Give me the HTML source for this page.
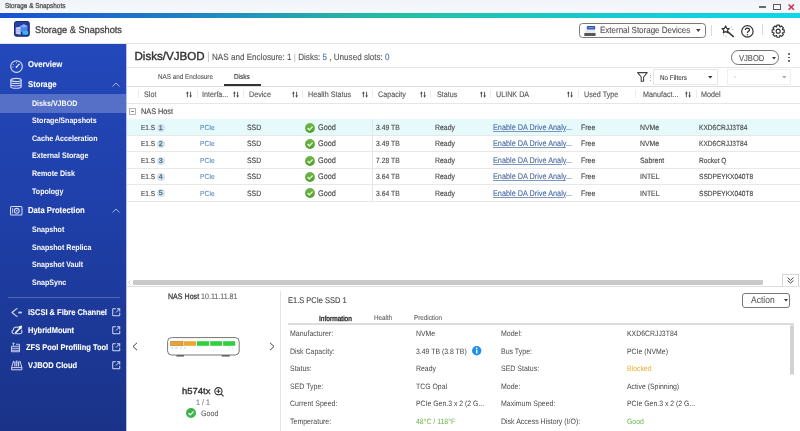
<!DOCTYPE html><html><head><meta charset="utf-8"><style>
*{margin:0;padding:0;box-sizing:border-box}
html,body{width:800px;height:431px;overflow:hidden;background:#fff;font-family:"Liberation Sans",sans-serif;text-rendering:geometricPrecision}
.t{position:absolute;white-space:nowrap;transform-origin:0 50%;-webkit-text-stroke-width:0.12px}
.a{position:absolute}
svg{position:absolute;overflow:visible}
</style></head><body><div id="root" style="position:absolute;left:0;top:0;width:800px;height:431px;will-change:transform;background:#fff;filter:blur(0.3px)">
<div class="a" style="left:0;top:0;width:800px;height:13px;background:linear-gradient(#f0f3f8,#f7f9fc)"></div><div class="t" style="left:5px;top:1.40px;font-size:7.17px;line-height:10px;color:#505050;font-weight:400;transform:scaleX(0.8929);-webkit-text-stroke-width:0.3px">Storage &amp; Snapshots</div>
<div class="a" style="left:758.8px;top:5.7px;width:7.1px;height:2px;background:#6a6a6a"></div><div class="a" style="left:772.8px;top:3.8px;width:8.2px;height:6.3px;border:1.8px solid #5a5a5a"></div><svg style="left:787.8px;top:3.8px" width="6.5" height="6.3" viewBox="0 0 6.5 6.3"><path d="M0.6 0.5L5.9 5.8M5.9 0.5L0.6 5.8" stroke="#cc3344" stroke-width="1.6"/></svg><div class="a" style="left:0;top:13px;width:800px;height:4.5px;background:linear-gradient(90deg,#1652d6 0%,#1e70c8 15%,#2090c0 29%,#26b0aa 42%,#20c0a2 50%,#20c4b0 57%,#18c8c8 71%,#12d0dc 85%,#10d6e8 100%)"></div><div class="a" style="left:0;top:43px;width:800px;height:1px;background:#e2e2e2"></div><svg style="left:14px;top:21.3px" width="15.8" height="15.8" viewBox="0 0 16 16">
<defs><linearGradient id="ag" x1="0" y1="0" x2="1" y2="1"><stop offset="0" stop-color="#2a48b0"/><stop offset="1" stop-color="#1a2a80"/></linearGradient></defs>
<rect x="0" y="0" width="16" height="16" rx="3" fill="#17206a"/>
<rect x="0.8" y="0.8" width="14.4" height="14.4" rx="2.4" fill="url(#ag)"/>
<path d="M6.5 5 L10 3.2 L13.8 5 L13.8 10.5 L10 12.5 L6.5 10.5Z" fill="#4a86ea"/>
<path d="M6.5 5 L10 6.8 L13.8 5 L10 3.2Z" fill="#7fb0f8"/>
<path d="M1.8 6.5 L6.8 5.5 L6.8 14 L1.8 13Z" fill="#c4d0f6"/>
<path d="M1.8 9 L6.8 8.6 M1.8 11 L6.8 10.8" stroke="#7890d8" stroke-width="0.6"/>
<rect x="8.6" y="10.2" width="5.8" height="3.8" rx="1" fill="#3ab4f2"/>
</svg><div class="t" style="left:35px;top:24.60px;font-size:9.66px;line-height:12px;color:#444;font-weight:400;transform:scaleX(0.9524);-webkit-text-stroke:0.3px #444">Storage &amp; Snapshots</div>
<div class="a" style="left:579px;top:23.3px;width:126.5px;height:14.6px;border:1px solid #7a7a7a;border-radius:3.5px"></div><svg style="left:584px;top:25.5px" width="12" height="10" viewBox="0 0 12 10">
<rect x="1.2" y="3" width="9.8" height="4" fill="#e4ecf6"/>
<rect x="2.8" y="0" width="8.4" height="3.6" rx="1.1" fill="#2d52b0"/>
<rect x="4.2" y="1.3" width="5.6" height="0.9" fill="#8fb2f2"/>
<rect x="0.3" y="7" width="11.3" height="2.9" rx="0.3" fill="#585858"/>
</svg><div class="t" style="left:600px;top:24.80px;font-size:8.96px;line-height:10px;color:#555;font-weight:400;transform:scaleX(0.8929);">External Storage Devices</div>
<svg style="left:696px;top:29.2px" width="5" height="3.5" viewBox="0 0 5 3.5"><path d="M0 0H4.6L2.3 3Z" fill="#444"/></svg><div class="a" style="left:711px;top:24.5px;width:1px;height:11px;background:#dadada"></div><div class="a" style="left:762px;top:24.3px;width:1px;height:11px;background:#dadada"></div><svg style="left:720px;top:24px" width="16" height="14" viewBox="0 0 16 14">
<path d="M5.6 2 L6.7 4.3 L9.2 4.6 L7.4 6.3 L7.9 8.8 L5.6 7.6 L3.3 8.8 L3.8 6.3 L2 4.6 L4.5 4.3Z" fill="none" stroke="#333" stroke-width="1.2" stroke-linejoin="round"/>
<path d="M7.6 7.6 L13.4 12.6" stroke="#333" stroke-width="1.4" stroke-linecap="round"/>
<circle cx="11.2" cy="3" r="0.55" fill="#888"/><circle cx="12.8" cy="5.5" r="0.55" fill="#888"/><circle cx="3.5" cy="11" r="0.55" fill="#888"/><circle cx="6" cy="12" r="0.55" fill="#888"/>
</svg><svg style="left:740.5px;top:24.6px" width="13" height="13" viewBox="0 0 13 13">
<circle cx="6.4" cy="6.4" r="5.7" fill="none" stroke="#333" stroke-width="1.2"/>
<path d="M4.4 5 C4.4 2.6 8.5 2.6 8.5 4.9 C8.5 6.4 6.4 6.3 6.4 8" fill="none" stroke="#333" stroke-width="1.3"/>
<circle cx="6.4" cy="9.7" r="0.8" fill="#333"/>
</svg><svg style="left:770.8px;top:23.8px" width="14.4" height="14.4" viewBox="0 0 24 24">
<path d="M9.32 4.89 L9.75 1.95 L14.25 1.95 L14.68 4.89 L15.14 5.08 L17.52 3.30 L20.70 6.48 L18.92 8.86 L19.11 9.32 L22.05 9.75 L22.05 14.25 L19.11 14.68 L18.92 15.14 L20.70 17.52 L17.52 20.70 L15.14 18.92 L14.68 19.11 L14.25 22.05 L9.75 22.05 L9.32 19.11 L8.86 18.92 L6.48 20.70 L3.30 17.52 L5.08 15.14 L4.89 14.68 L1.95 14.25 L1.95 9.75 L4.89 9.32 L5.08 8.86 L3.30 6.48 L6.48 3.30 L8.86 5.08Z" fill="none" stroke="#333" stroke-width="1.9" stroke-linejoin="round"/>
<circle cx="12" cy="12" r="3.4" fill="none" stroke="#333" stroke-width="1.8"/>
</svg><div class="a" style="left:0;top:44px;width:126px;height:387px;background:linear-gradient(#2348ba,#1f3fa8 45%,#1a3388)"></div><div class="a" style="left:0;top:94px;width:126px;height:18.5px;background:#5570c6"></div><div class="t" style="left:28px;top:59.20px;font-size:8.62px;line-height:10px;color:#ffffff;font-weight:700;transform:scaleX(0.8929);-webkit-text-stroke-width:0.1px">Overview</div>
<div class="t" style="left:28px;top:79.00px;font-size:8.62px;line-height:10px;color:#ffffff;font-weight:700;transform:scaleX(0.8929);-webkit-text-stroke-width:0.1px">Storage</div>
<div class="t" style="left:28px;top:205.30px;font-size:8.62px;line-height:10px;color:#ffffff;font-weight:700;transform:scaleX(0.8929);-webkit-text-stroke-width:0.1px">Data Protection</div>
<div class="t" style="left:31.7px;top:98.60px;font-size:7.95px;line-height:10px;color:#ffffff;font-weight:700;transform:scaleX(0.8929);-webkit-text-stroke-width:0">Disks/VJBOD</div>
<div class="t" style="left:31.7px;top:116.20px;font-size:7.95px;line-height:10px;color:#ffffff;font-weight:700;transform:scaleX(0.8929);-webkit-text-stroke-width:0">Storage/Snapshots</div>
<div class="t" style="left:31.7px;top:133.80px;font-size:7.95px;line-height:10px;color:#ffffff;font-weight:700;transform:scaleX(0.8929);-webkit-text-stroke-width:0">Cache Acceleration</div>
<div class="t" style="left:31.7px;top:151.40px;font-size:7.95px;line-height:10px;color:#ffffff;font-weight:700;transform:scaleX(0.8929);-webkit-text-stroke-width:0">External Storage</div>
<div class="t" style="left:31.7px;top:168.90px;font-size:7.95px;line-height:10px;color:#ffffff;font-weight:700;transform:scaleX(0.8929);-webkit-text-stroke-width:0">Remote Disk</div>
<div class="t" style="left:31.7px;top:186.50px;font-size:7.95px;line-height:10px;color:#ffffff;font-weight:700;transform:scaleX(0.8929);-webkit-text-stroke-width:0">Topology</div>
<div class="t" style="left:31.7px;top:225.10px;font-size:7.95px;line-height:10px;color:#ffffff;font-weight:700;transform:scaleX(0.8929);-webkit-text-stroke-width:0">Snapshot</div>
<div class="t" style="left:31.7px;top:242.80px;font-size:7.95px;line-height:10px;color:#ffffff;font-weight:700;transform:scaleX(0.8929);-webkit-text-stroke-width:0">Snapshot Replica</div>
<div class="t" style="left:31.7px;top:260.40px;font-size:7.95px;line-height:10px;color:#ffffff;font-weight:700;transform:scaleX(0.8929);-webkit-text-stroke-width:0">Snapshot Vault</div>
<div class="t" style="left:31.7px;top:278.00px;font-size:7.95px;line-height:10px;color:#ffffff;font-weight:700;transform:scaleX(0.8929);-webkit-text-stroke-width:0">SnapSync</div>
<svg style="left:112px;top:81.5px" width="8" height="5" viewBox="0 0 8 5"><path d="M0.5 4.5 L4 1 L7.5 4.5" fill="none" stroke="#b4c2ec" stroke-width="0.9"/></svg><svg style="left:112px;top:207.8px" width="8" height="5" viewBox="0 0 8 5"><path d="M0.5 4.5 L4 1 L7.5 4.5" fill="none" stroke="#b4c2ec" stroke-width="0.9"/></svg><div class="a" style="left:8px;top:297px;width:112px;height:1px;background:rgba(255,255,255,0.22)"></div><div class="t" style="left:28.2px;top:307.40px;font-size:8.40px;line-height:10px;color:#ffffff;font-weight:700;transform:scaleX(0.8929);-webkit-text-stroke-width:0.1px">iSCSI &amp; Fibre Channel</div>
<svg style="left:112px;top:308.4px" width="8.5" height="8.5" viewBox="0 0 9 9"><path d="M4 0.8 H0.8 V8.2 H8.2 V5" fill="none" stroke="#dfe6fa" stroke-width="1"/><path d="M4.2 4.8 L8.2 0.8 M5.2 0.8 H8.2 V3.8" fill="none" stroke="#dfe6fa" stroke-width="1"/></svg><div class="t" style="left:28.2px;top:324.70px;font-size:8.40px;line-height:10px;color:#ffffff;font-weight:700;transform:scaleX(0.8929);-webkit-text-stroke-width:0.1px">HybridMount</div>
<svg style="left:112px;top:325.7px" width="8.5" height="8.5" viewBox="0 0 9 9"><path d="M4 0.8 H0.8 V8.2 H8.2 V5" fill="none" stroke="#dfe6fa" stroke-width="1"/><path d="M4.2 4.8 L8.2 0.8 M5.2 0.8 H8.2 V3.8" fill="none" stroke="#dfe6fa" stroke-width="1"/></svg><div class="t" style="left:25.6px;top:342.20px;font-size:8.40px;line-height:10px;color:#ffffff;font-weight:700;transform:scaleX(0.8929);-webkit-text-stroke-width:0.1px">ZFS Pool Profiling Tool</div>
<svg style="left:112px;top:343.2px" width="8.5" height="8.5" viewBox="0 0 9 9"><path d="M4 0.8 H0.8 V8.2 H8.2 V5" fill="none" stroke="#dfe6fa" stroke-width="1"/><path d="M4.2 4.8 L8.2 0.8 M5.2 0.8 H8.2 V3.8" fill="none" stroke="#dfe6fa" stroke-width="1"/></svg><div class="t" style="left:28.2px;top:359.50px;font-size:8.40px;line-height:10px;color:#ffffff;font-weight:700;transform:scaleX(0.8929);-webkit-text-stroke-width:0.1px">VJBOD Cloud</div>
<svg style="left:112px;top:360.5px" width="8.5" height="8.5" viewBox="0 0 9 9"><path d="M4 0.8 H0.8 V8.2 H8.2 V5" fill="none" stroke="#dfe6fa" stroke-width="1"/><path d="M4.2 4.8 L8.2 0.8 M5.2 0.8 H8.2 V3.8" fill="none" stroke="#dfe6fa" stroke-width="1"/></svg><svg style="left:9.8px;top:60.2px" width="13" height="13" viewBox="0 0 13 13">
<circle cx="6.5" cy="6.5" r="5.8" fill="none" stroke="#d5ddf5" stroke-width="1.15"/>
<path d="M6.5 7 L9 4.2" stroke="#d5ddf5" stroke-width="1.2" stroke-linecap="round"/><circle cx="6.5" cy="7" r="0.9" fill="#d5ddf5"/>
<path d="M3.2 4.4 L4 5 M6.5 2.2 V3.2 M9.9 4.3 L9.1 4.9 M2.4 7 H3.3" stroke="#d5ddf5" stroke-width="0.9"/>
</svg><svg style="left:10.3px;top:78.2px" width="12" height="11" viewBox="0 0 12 11">
<ellipse cx="6" cy="2" rx="5.2" ry="1.6" fill="none" stroke="#d5ddf5" stroke-width="1.1"/>
<path d="M0.8 2 V8.8 C0.8 10.8 11.2 10.8 11.2 8.8 V2 M0.8 4.3 C0.8 6 11.2 6 11.2 4.3 M0.8 6.6 C0.8 8.4 11.2 8.4 11.2 6.6" fill="none" stroke="#d5ddf5" stroke-width="1.05"/>
</svg><svg style="left:10px;top:205.5px" width="12.5" height="9.5" viewBox="0 0 12 9">
<rect x="0.5" y="0.5" width="11" height="8" rx="1" fill="none" stroke="#d5ddf5" stroke-width="1"/>
<circle cx="6.5" cy="4.5" r="2.3" fill="none" stroke="#d5ddf5" stroke-width="1"/><circle cx="6.5" cy="4.5" r="0.8" fill="#d5ddf5"/>
<path d="M2.5 2 V7" stroke="#d5ddf5" stroke-width="0.8"/>
</svg><svg style="left:11px;top:307.5px" width="12" height="9" viewBox="0 0 12 9">
<path d="M6.6 0.8 H5.4 L1 4.5 L5.4 8.2 H6.6" fill="none" stroke="#d5ddf5" stroke-width="1.1" stroke-linejoin="round"/><path d="M7.4 4.5 H10.8" stroke="#d5ddf5" stroke-width="1.7"/>
</svg><svg style="left:11px;top:325px" width="12" height="9.5" viewBox="0 0 12 9.5">
<path d="M3.2 8.8 C0.6 8.8 0.2 5.6 2.3 5 C2.2 2.2 5.6 1.2 7.3 2.8" fill="none" stroke="#d5ddf5" stroke-width="1.1"/>
<path d="M3.4 8.8 H9 C11 8.8 11.6 6.4 10.4 5.2" fill="none" stroke="#d5ddf5" stroke-width="1.1"/>
<path d="M4.2 8 L9.2 3" stroke="#fff" stroke-width="1.6"/><path d="M7 1.6 L11.2 0.6 L10.3 4.8Z" fill="#fff"/>
</svg><svg style="left:11px;top:342px" width="9" height="10.5" viewBox="0 0 9 10">
<path d="M2.5 3.5 V0.5 M1.3 1.7 L2.5 0.5 L3.7 1.7" fill="none" stroke="#d5ddf5" stroke-width="0.8"/>
<path d="M0.5 4 H8.5 M0.5 6 H8.5 M0.5 8 H8.5 M0.5 4 V9.5 H8.5 V4 M5 2 H8.5 V4" fill="none" stroke="#d5ddf5" stroke-width="0.9"/>
</svg><svg style="left:10.8px;top:359.5px" width="11.5" height="10.5" viewBox="0 0 11.5 10.5">
<path d="M2.6 0.8 L0.6 7.6 V9.8 H10.9 V7.6 L8.9 0.8 M0.6 7.6 H10.9" fill="none" stroke="#d5ddf5" stroke-width="0.95"/>
<path d="M3.9 2 V6.4 M5.75 0.6 V6.4 M7.6 2 V6.4" stroke="#d5ddf5" stroke-width="1.1"/>
<path d="M3 2.6 L3.9 1.4 L4.8 2.6 M6.7 2.6 L7.6 1.4 L8.5 2.6" fill="none" stroke="#d5ddf5" stroke-width="0.7"/>
</svg><div class="a" style="left:126px;top:44px;width:1px;height:387px;background:#b8c2ea"></div><div class="t" style="left:134.5px;top:50.00px;font-size:11.60px;line-height:14px;color:#333;font-weight:400;-webkit-text-stroke-width:0.4px">Disks/VJBOD</div>
<div class="a" style="left:207.5px;top:52px;width:1px;height:10px;background:#c8c8c8"></div><div class="t" style="left:212px;top:51.80px;font-size:9.07px;line-height:10px;color:#555;font-weight:400;transform:scaleX(0.8929);">NAS and Enclosure: 1 <span style="color:#bbb">|</span> Disks: <span style="color:#4a72a8">5</span> , Unused slots: <span style="color:#4a72a8">0</span></div>
<div class="a" style="left:731px;top:50.2px;width:47.5px;height:14.6px;border:1px solid #707070;border-radius:7.3px"></div><div class="t" style="left:739px;top:52.60px;font-size:8.51px;line-height:10px;color:#555;font-weight:400;transform:scaleX(0.8929);">VJBOD</div>
<svg style="left:771.5px;top:56.5px" width="4" height="3" viewBox="0 0 4 3"><path d="M0 0H4L2 2.5Z" fill="#333"/></svg><div class="a" style="left:788.4px;top:53.2px;width:1.8px;height:1.8px;background:#4a4a4a;border-radius:50%"></div><div class="a" style="left:788.4px;top:56.5px;width:1.8px;height:1.8px;background:#4a4a4a;border-radius:50%"></div><div class="a" style="left:788.4px;top:59.8px;width:1.8px;height:1.8px;background:#4a4a4a;border-radius:50%"></div><div class="a" style="left:127px;top:67px;width:673px;height:1px;background:#e6e6e6"></div><div class="t" style="left:157.5px;top:74.00px;font-size:7.06px;line-height:8px;color:#555;font-weight:400;transform:scaleX(0.8929);">NAS and Enclosure</div>
<div class="t" style="left:233.75px;top:72.90px;font-size:7.17px;line-height:8px;color:#333;font-weight:400;transform:scaleX(0.8929);">Disks</div>
<div class="a" style="left:223.75px;top:84px;width:37px;height:2px;background:#333"></div><div class="a" style="left:127px;top:85.5px;width:673px;height:1px;background:#dcdcdc"></div><svg style="left:636.8px;top:72px" width="11" height="10" viewBox="0 0 11 10"><path d="M0.6 0.6 H10.2 L6.6 5 V9.2 H4.2 V5Z" fill="none" stroke="#444" stroke-width="1.1" stroke-linejoin="round"/></svg><div class="a" style="left:650px;top:74.5px;width:1px;height:1px;background:#aaa"></div><div class="a" style="left:650px;top:77px;width:1px;height:1px;background:#aaa"></div><div class="a" style="left:650px;top:79.5px;width:1px;height:1px;background:#aaa"></div><div class="a" style="left:653.2px;top:69.2px;width:65px;height:15.6px;border:1px solid #e6e6e6"></div><div class="t" style="left:660px;top:74.50px;font-size:7.06px;line-height:8px;color:#444;font-weight:400;transform:scaleX(0.8929);">No Filters</div>
<svg style="left:708px;top:76px" width="4.5" height="3" viewBox="0 0 4.5 3"><path d="M0 0H4.5L2.25 2.6Z" fill="#333"/></svg><div class="a" style="left:727px;top:69.2px;width:64px;height:15.6px;border:1px solid #efefef"></div><div class="t" style="left:733.5px;top:74.00px;font-size:7.06px;line-height:8px;color:#ccc;font-weight:400;transform:scaleX(0.8929);">-</div>
<svg style="left:781.5px;top:76px" width="4.5" height="3" viewBox="0 0 4.5 3"><path d="M0 0H4.5L2.25 2.6Z" fill="#aaa"/></svg><div class="a" style="left:137.95px;top:90px;width:1px;height:8px;background:#ececec"></div><div class="t" style="left:143.75px;top:89.80px;font-size:8.06px;line-height:10px;color:#555;font-weight:400;transform:scaleX(0.8929);">Slot</div>
<svg style="left:185.75px;top:91.3px" width="6" height="7" viewBox="0 0 6 7"><path d="M1.4 6.2 V1.8 M4.6 0.8 V5.2" stroke="#444" stroke-width="0.9"/><path d="M0.1 2.4 L1.4 0.3 L2.7 2.4Z M3.3 4.6 L4.6 6.8 L5.9 4.6Z" fill="#444"/></svg><div class="a" style="left:196.7px;top:90px;width:1px;height:8px;background:#ececec"></div><div class="t" style="left:201.75px;top:89.80px;font-size:8.06px;line-height:10px;color:#555;font-weight:400;transform:scaleX(0.8929);">Interfa...</div>
<svg style="left:233px;top:91.3px" width="6" height="7" viewBox="0 0 6 7"><path d="M1.4 6.2 V1.8 M4.6 0.8 V5.2" stroke="#444" stroke-width="0.9"/><path d="M0.1 2.4 L1.4 0.3 L2.7 2.4Z M3.3 4.6 L4.6 6.8 L5.9 4.6Z" fill="#444"/></svg><div class="a" style="left:242.95px;top:90px;width:1px;height:8px;background:#ececec"></div><div class="t" style="left:249.25px;top:89.80px;font-size:8.06px;line-height:10px;color:#555;font-weight:400;transform:scaleX(0.8929);">Device</div>
<svg style="left:291.5px;top:91.3px" width="6" height="7" viewBox="0 0 6 7"><path d="M1.4 6.2 V1.8 M4.6 0.8 V5.2" stroke="#444" stroke-width="0.9"/><path d="M0.1 2.4 L1.4 0.3 L2.7 2.4Z M3.3 4.6 L4.6 6.8 L5.9 4.6Z" fill="#444"/></svg><div class="a" style="left:302.2px;top:90px;width:1px;height:8px;background:#ececec"></div><div class="t" style="left:308px;top:89.80px;font-size:8.06px;line-height:10px;color:#555;font-weight:400;transform:scaleX(0.8929);">Health Status</div>
<svg style="left:362px;top:91.3px" width="6" height="7" viewBox="0 0 6 7"><path d="M1.4 6.2 V1.8 M4.6 0.8 V5.2" stroke="#444" stroke-width="0.9"/><path d="M0.1 2.4 L1.4 0.3 L2.7 2.4Z M3.3 4.6 L4.6 6.8 L5.9 4.6Z" fill="#444"/></svg><div class="a" style="left:371.7px;top:90px;width:1px;height:8px;background:#ececec"></div><div class="t" style="left:378px;top:89.80px;font-size:8.06px;line-height:10px;color:#555;font-weight:400;transform:scaleX(0.8929);">Capacity</div>
<svg style="left:420px;top:91.3px" width="6" height="7" viewBox="0 0 6 7"><path d="M1.4 6.2 V1.8 M4.6 0.8 V5.2" stroke="#444" stroke-width="0.9"/><path d="M0.1 2.4 L1.4 0.3 L2.7 2.4Z M3.3 4.6 L4.6 6.8 L5.9 4.6Z" fill="#444"/></svg><div class="a" style="left:430.2px;top:90px;width:1px;height:8px;background:#ececec"></div><div class="t" style="left:437px;top:89.80px;font-size:8.06px;line-height:10px;color:#555;font-weight:400;transform:scaleX(0.8929);">Status</div>
<svg style="left:479.5px;top:91.3px" width="6" height="7" viewBox="0 0 6 7"><path d="M1.4 6.2 V1.8 M4.6 0.8 V5.2" stroke="#444" stroke-width="0.9"/><path d="M0.1 2.4 L1.4 0.3 L2.7 2.4Z M3.3 4.6 L4.6 6.8 L5.9 4.6Z" fill="#444"/></svg><div class="a" style="left:489.7px;top:90px;width:1px;height:8px;background:#ececec"></div><div class="t" style="left:495.5px;top:89.80px;font-size:8.06px;line-height:10px;color:#555;font-weight:400;transform:scaleX(0.8929);">ULINK DA</div>
<svg style="left:567px;top:91.3px" width="6" height="7" viewBox="0 0 6 7"><path d="M1.4 6.2 V1.8 M4.6 0.8 V5.2" stroke="#444" stroke-width="0.9"/><path d="M0.1 2.4 L1.4 0.3 L2.7 2.4Z M3.3 4.6 L4.6 6.8 L5.9 4.6Z" fill="#444"/></svg><div class="a" style="left:577.95px;top:90px;width:1px;height:8px;background:#ececec"></div><div class="t" style="left:583.75px;top:89.80px;font-size:8.06px;line-height:10px;color:#555;font-weight:400;transform:scaleX(0.8929);">Used Type</div>
<div class="a" style="left:635.45px;top:90px;width:1px;height:8px;background:#ececec"></div><div class="t" style="left:642.5px;top:89.80px;font-size:8.06px;line-height:10px;color:#555;font-weight:400;transform:scaleX(0.8929);">Manufact...</div>
<svg style="left:684.5px;top:91.3px" width="6" height="7" viewBox="0 0 6 7"><path d="M1.4 6.2 V1.8 M4.6 0.8 V5.2" stroke="#444" stroke-width="0.9"/><path d="M0.1 2.4 L1.4 0.3 L2.7 2.4Z M3.3 4.6 L4.6 6.8 L5.9 4.6Z" fill="#444"/></svg><div class="a" style="left:695.6px;top:90px;width:1px;height:8px;background:#ececec"></div><div class="t" style="left:701px;top:89.80px;font-size:8.06px;line-height:10px;color:#555;font-weight:400;transform:scaleX(0.8929);">Model</div>
<div class="a" style="left:127px;top:103px;width:673px;height:1px;background:#e6e6e6"></div><div class="a" style="left:129.1px;top:108.2px;width:7px;height:6.6px;border:1px solid #b4b4b4"></div><div class="a" style="left:130.8px;top:111px;width:3.6px;height:1px;background:#888"></div><div class="t" style="left:141px;top:107.10px;font-size:8.18px;line-height:10px;color:#444;font-weight:400;transform:scaleX(0.8929);">NAS Host</div>
<div class="a" style="left:127px;top:119px;width:673px;height:16.3px;background:#e6f9fb"></div><div class="a" style="left:127px;top:134.8px;width:673px;height:1px;background:#e8e8e8"></div><div class="t" style="left:141px;top:122.85px;font-size:7.28px;line-height:10px;color:#444;font-weight:400;transform:scaleX(0.8929);">E1.S</div>
<div class="a" style="left:156.6px;top:123.55px;width:8px;height:8px;border-radius:50%;background:#d3e2ec;text-align:center;font-size:7px;line-height:10.4px;color:#55728a;-webkit-text-stroke-width:0.3px">1</div><div class="t" style="left:200px;top:122.85px;font-size:7.39px;line-height:10px;color:#4a80b8;font-weight:400;transform:scaleX(0.8929);-webkit-text-stroke-width:0.05px">PCIe</div>
<div class="t" style="left:246.6px;top:122.85px;font-size:7.73px;line-height:10px;color:#444;font-weight:400;transform:scaleX(0.8929);">SSD</div>
<svg style="left:305px;top:122.65px" width="10" height="10" viewBox="0 0 10 10"><defs><linearGradient id="gg0" x1="0" y1="0" x2="0" y2="1"><stop offset="0" stop-color="#72b84a"/><stop offset="1" stop-color="#4f9a30"/></linearGradient></defs><circle cx="5" cy="5" r="4.9" fill="url(#gg0)"/><path d="M2.5 5.1 L4.3 6.9 L7.6 3.4" fill="none" stroke="#dff5c0" stroke-width="1.5"/></svg><div class="t" style="left:318px;top:122.85px;font-size:8.18px;line-height:10px;color:#444;font-weight:400;transform:scaleX(0.8929);">Good</div>
<div class="t" style="left:375.8px;top:122.85px;font-size:7.62px;line-height:10px;color:#444;font-weight:400;transform:scaleX(0.8929);">3.49 TB</div>
<div class="t" style="left:434.5px;top:122.85px;font-size:7.73px;line-height:10px;color:#444;font-weight:400;transform:scaleX(0.8929);">Ready</div>
<div class="t" style="left:493px;top:122.85px;font-size:8.18px;line-height:10px;color:#4a6aa0;font-weight:400;transform:scaleX(0.8929);-webkit-text-stroke-width:0.1px"><span style="text-decoration:underline;text-decoration-color:#7f98c0">Enable DA Drive Analy</span>...</div>
<div class="t" style="left:581.25px;top:122.85px;font-size:7.84px;line-height:10px;color:#444;font-weight:400;transform:scaleX(0.8929);">Free</div>
<div class="t" style="left:639.5px;top:122.85px;font-size:7.73px;line-height:10px;color:#444;font-weight:400;transform:scaleX(0.8929);">NVMe</div>
<div class="t" style="left:698.75px;top:122.85px;font-size:7.39px;line-height:10px;color:#444;font-weight:400;transform:scaleX(0.8929);">KXD6CRJJ3T84</div>
<div class="a" style="left:127px;top:151.4px;width:673px;height:1px;background:#e8e8e8"></div><div class="t" style="left:141px;top:139.30px;font-size:7.28px;line-height:10px;color:#444;font-weight:400;transform:scaleX(0.8929);">E1.S</div>
<div class="a" style="left:156.6px;top:140.00px;width:8px;height:8px;border-radius:50%;background:#d3e2ec;text-align:center;font-size:7px;line-height:10.4px;color:#55728a;-webkit-text-stroke-width:0.3px">2</div><div class="t" style="left:200px;top:139.30px;font-size:7.39px;line-height:10px;color:#4a80b8;font-weight:400;transform:scaleX(0.8929);-webkit-text-stroke-width:0.05px">PCIe</div>
<div class="t" style="left:246.6px;top:139.30px;font-size:7.73px;line-height:10px;color:#444;font-weight:400;transform:scaleX(0.8929);">SSD</div>
<svg style="left:305px;top:139.10000000000002px" width="10" height="10" viewBox="0 0 10 10"><defs><linearGradient id="gg1" x1="0" y1="0" x2="0" y2="1"><stop offset="0" stop-color="#72b84a"/><stop offset="1" stop-color="#4f9a30"/></linearGradient></defs><circle cx="5" cy="5" r="4.9" fill="url(#gg1)"/><path d="M2.5 5.1 L4.3 6.9 L7.6 3.4" fill="none" stroke="#dff5c0" stroke-width="1.5"/></svg><div class="t" style="left:318px;top:139.30px;font-size:8.18px;line-height:10px;color:#444;font-weight:400;transform:scaleX(0.8929);">Good</div>
<div class="t" style="left:375.8px;top:139.30px;font-size:7.62px;line-height:10px;color:#444;font-weight:400;transform:scaleX(0.8929);">3.49 TB</div>
<div class="t" style="left:434.5px;top:139.30px;font-size:7.73px;line-height:10px;color:#444;font-weight:400;transform:scaleX(0.8929);">Ready</div>
<div class="t" style="left:493px;top:139.30px;font-size:8.18px;line-height:10px;color:#4a6aa0;font-weight:400;transform:scaleX(0.8929);-webkit-text-stroke-width:0.1px"><span style="text-decoration:underline;text-decoration-color:#7f98c0">Enable DA Drive Analy</span>...</div>
<div class="t" style="left:581.25px;top:139.30px;font-size:7.84px;line-height:10px;color:#444;font-weight:400;transform:scaleX(0.8929);">Free</div>
<div class="t" style="left:639.5px;top:139.30px;font-size:7.73px;line-height:10px;color:#444;font-weight:400;transform:scaleX(0.8929);">NVMe</div>
<div class="t" style="left:698.75px;top:139.30px;font-size:7.39px;line-height:10px;color:#444;font-weight:400;transform:scaleX(0.8929);">KXD6CRJJ3T84</div>
<div class="a" style="left:127px;top:167.8px;width:673px;height:1px;background:#e8e8e8"></div><div class="t" style="left:141px;top:155.80px;font-size:7.28px;line-height:10px;color:#444;font-weight:400;transform:scaleX(0.8929);">E1.S</div>
<div class="a" style="left:156.6px;top:156.50px;width:8px;height:8px;border-radius:50%;background:#d3e2ec;text-align:center;font-size:7px;line-height:10.4px;color:#55728a;-webkit-text-stroke-width:0.3px">3</div><div class="t" style="left:200px;top:155.80px;font-size:7.39px;line-height:10px;color:#4a80b8;font-weight:400;transform:scaleX(0.8929);-webkit-text-stroke-width:0.05px">PCIe</div>
<div class="t" style="left:246.6px;top:155.80px;font-size:7.73px;line-height:10px;color:#444;font-weight:400;transform:scaleX(0.8929);">SSD</div>
<svg style="left:305px;top:155.60000000000002px" width="10" height="10" viewBox="0 0 10 10"><defs><linearGradient id="gg2" x1="0" y1="0" x2="0" y2="1"><stop offset="0" stop-color="#72b84a"/><stop offset="1" stop-color="#4f9a30"/></linearGradient></defs><circle cx="5" cy="5" r="4.9" fill="url(#gg2)"/><path d="M2.5 5.1 L4.3 6.9 L7.6 3.4" fill="none" stroke="#dff5c0" stroke-width="1.5"/></svg><div class="t" style="left:318px;top:155.80px;font-size:8.18px;line-height:10px;color:#444;font-weight:400;transform:scaleX(0.8929);">Good</div>
<div class="t" style="left:375.8px;top:155.80px;font-size:7.62px;line-height:10px;color:#444;font-weight:400;transform:scaleX(0.8929);">7.28 TB</div>
<div class="t" style="left:434.5px;top:155.80px;font-size:7.73px;line-height:10px;color:#444;font-weight:400;transform:scaleX(0.8929);">Ready</div>
<div class="t" style="left:493px;top:155.80px;font-size:8.18px;line-height:10px;color:#4a6aa0;font-weight:400;transform:scaleX(0.8929);-webkit-text-stroke-width:0.1px"><span style="text-decoration:underline;text-decoration-color:#7f98c0">Enable DA Drive Analy</span>...</div>
<div class="t" style="left:581.25px;top:155.80px;font-size:7.84px;line-height:10px;color:#444;font-weight:400;transform:scaleX(0.8929);">Free</div>
<div class="t" style="left:639.5px;top:155.80px;font-size:7.73px;line-height:10px;color:#444;font-weight:400;transform:scaleX(0.8929);">Sabrent</div>
<div class="t" style="left:698.75px;top:155.80px;font-size:7.39px;line-height:10px;color:#444;font-weight:400;transform:scaleX(0.8929);">Rocket Q</div>
<div class="a" style="left:127px;top:184.25px;width:673px;height:1px;background:#e8e8e8"></div><div class="t" style="left:141px;top:172.22px;font-size:7.28px;line-height:10px;color:#444;font-weight:400;transform:scaleX(0.8929);">E1.S</div>
<div class="a" style="left:156.6px;top:172.92px;width:8px;height:8px;border-radius:50%;background:#d3e2ec;text-align:center;font-size:7px;line-height:10.4px;color:#55728a;-webkit-text-stroke-width:0.3px">4</div><div class="t" style="left:200px;top:172.22px;font-size:7.39px;line-height:10px;color:#4a80b8;font-weight:400;transform:scaleX(0.8929);-webkit-text-stroke-width:0.05px">PCIe</div>
<div class="t" style="left:246.6px;top:172.22px;font-size:7.73px;line-height:10px;color:#444;font-weight:400;transform:scaleX(0.8929);">SSD</div>
<svg style="left:305px;top:172.025px" width="10" height="10" viewBox="0 0 10 10"><defs><linearGradient id="gg3" x1="0" y1="0" x2="0" y2="1"><stop offset="0" stop-color="#72b84a"/><stop offset="1" stop-color="#4f9a30"/></linearGradient></defs><circle cx="5" cy="5" r="4.9" fill="url(#gg3)"/><path d="M2.5 5.1 L4.3 6.9 L7.6 3.4" fill="none" stroke="#dff5c0" stroke-width="1.5"/></svg><div class="t" style="left:318px;top:172.22px;font-size:8.18px;line-height:10px;color:#444;font-weight:400;transform:scaleX(0.8929);">Good</div>
<div class="t" style="left:375.8px;top:172.22px;font-size:7.62px;line-height:10px;color:#444;font-weight:400;transform:scaleX(0.8929);">3.64 TB</div>
<div class="t" style="left:434.5px;top:172.22px;font-size:7.73px;line-height:10px;color:#444;font-weight:400;transform:scaleX(0.8929);">Ready</div>
<div class="t" style="left:493px;top:172.22px;font-size:8.18px;line-height:10px;color:#4a6aa0;font-weight:400;transform:scaleX(0.8929);-webkit-text-stroke-width:0.1px"><span style="text-decoration:underline;text-decoration-color:#7f98c0">Enable DA Drive Analy</span>...</div>
<div class="t" style="left:581.25px;top:172.22px;font-size:7.84px;line-height:10px;color:#444;font-weight:400;transform:scaleX(0.8929);">Free</div>
<div class="t" style="left:639.5px;top:172.22px;font-size:7.73px;line-height:10px;color:#444;font-weight:400;transform:scaleX(0.8929);">INTEL</div>
<div class="t" style="left:698.75px;top:172.22px;font-size:7.39px;line-height:10px;color:#444;font-weight:400;transform:scaleX(0.8929);">SSDPEYKX040T8</div>
<div class="a" style="left:127px;top:200.5px;width:673px;height:1px;background:#e8e8e8"></div><div class="t" style="left:141px;top:188.57px;font-size:7.28px;line-height:10px;color:#444;font-weight:400;transform:scaleX(0.8929);">E1.S</div>
<div class="a" style="left:156.6px;top:189.27px;width:8px;height:8px;border-radius:50%;background:#d3e2ec;text-align:center;font-size:7px;line-height:10.4px;color:#55728a;-webkit-text-stroke-width:0.3px">5</div><div class="t" style="left:200px;top:188.57px;font-size:7.39px;line-height:10px;color:#4a80b8;font-weight:400;transform:scaleX(0.8929);-webkit-text-stroke-width:0.05px">PCIe</div>
<div class="t" style="left:246.6px;top:188.57px;font-size:7.73px;line-height:10px;color:#444;font-weight:400;transform:scaleX(0.8929);">SSD</div>
<svg style="left:305px;top:188.375px" width="10" height="10" viewBox="0 0 10 10"><defs><linearGradient id="gg4" x1="0" y1="0" x2="0" y2="1"><stop offset="0" stop-color="#72b84a"/><stop offset="1" stop-color="#4f9a30"/></linearGradient></defs><circle cx="5" cy="5" r="4.9" fill="url(#gg4)"/><path d="M2.5 5.1 L4.3 6.9 L7.6 3.4" fill="none" stroke="#dff5c0" stroke-width="1.5"/></svg><div class="t" style="left:318px;top:188.57px;font-size:8.18px;line-height:10px;color:#444;font-weight:400;transform:scaleX(0.8929);">Good</div>
<div class="t" style="left:375.8px;top:188.57px;font-size:7.62px;line-height:10px;color:#444;font-weight:400;transform:scaleX(0.8929);">3.64 TB</div>
<div class="t" style="left:434.5px;top:188.57px;font-size:7.73px;line-height:10px;color:#444;font-weight:400;transform:scaleX(0.8929);">Ready</div>
<div class="t" style="left:493px;top:188.57px;font-size:8.18px;line-height:10px;color:#4a6aa0;font-weight:400;transform:scaleX(0.8929);-webkit-text-stroke-width:0.1px"><span style="text-decoration:underline;text-decoration-color:#7f98c0">Enable DA Drive Analy</span>...</div>
<div class="t" style="left:581.25px;top:188.57px;font-size:7.84px;line-height:10px;color:#444;font-weight:400;transform:scaleX(0.8929);">Free</div>
<div class="t" style="left:639.5px;top:188.57px;font-size:7.73px;line-height:10px;color:#444;font-weight:400;transform:scaleX(0.8929);">INTEL</div>
<div class="t" style="left:698.75px;top:188.57px;font-size:7.39px;line-height:10px;color:#444;font-weight:400;transform:scaleX(0.8929);">SSDPEYKX040T8</div>
<div class="a" style="left:372.3px;top:119px;width:1px;height:82px;background:#e6e6e6"></div><svg style="left:128px;top:279.5px" width="3" height="5" viewBox="0 0 3 5"><path d="M2.5 0.5 L0.5 2.5 L2.5 4.5" fill="none" stroke="#bbb" stroke-width="0.7"/></svg><div class="a" style="left:132.5px;top:280px;width:630px;height:4.5px;background:#c9c9c9;border-radius:1px"></div><div class="a" style="left:782px;top:273.8px;width:17px;height:13px;border:1px solid #d6d6d6;border-bottom:none;background:#fff"></div><svg style="left:786.5px;top:277px" width="7" height="7" viewBox="0 0 7 7"><path d="M0.6 0.6 L3.5 3.3 L6.4 0.6 M0.6 3.5 L3.5 6.2 L6.4 3.5" fill="none" stroke="#444" stroke-width="1"/></svg><div class="a" style="left:127px;top:286px;width:673px;height:1px;background:#dedede"></div><div class="t" style="left:168.3px;top:292.00px;font-size:7.95px;line-height:10px;color:#333;font-weight:400;transform:scaleX(0.8929);"><span style="-webkit-text-stroke-width:0.25px">NAS Host</span> <span style="color:#666">10.11.11.81</span></div>
<div class="a" style="left:280.3px;top:291px;width:1px;height:140px;background:#e3e3e3"></div><svg style="left:131.5px;top:342px" width="6" height="9" viewBox="0 0 6 9"><path d="M5 0.8 L1 4.5 L5 8.2" fill="none" stroke="#444" stroke-width="1"/></svg><svg style="left:269px;top:342px" width="6" height="9" viewBox="0 0 6 9"><path d="M1 0.8 L5 4.5 L1 8.2" fill="none" stroke="#444" stroke-width="1"/></svg><svg style="left:167px;top:337px" width="73" height="21" viewBox="0 0 73 21">
<rect x="0.6" y="0.6" width="71.6" height="17.4" rx="4" fill="#fff" stroke="#777" stroke-width="1"/>
<rect x="3.6" y="4.2" width="12.4" height="4.6" fill="#e8a232" stroke="#b07a30" stroke-width="0.5"/>
<rect x="16.8" y="4.2" width="12.2" height="4.6" fill="#eda62e"/>
<rect x="30" y="4.2" width="12.2" height="4.6" fill="#2fcf3f"/>
<rect x="43.2" y="4.2" width="11.9" height="4.6" fill="#2fcf3f"/>
<rect x="56.1" y="4.2" width="12.1" height="4.6" fill="#2fcf3f"/>
<path d="M4 11 H6 M8 11 H11 M13 11 H15 M17 11 H19" stroke="#9ab" stroke-width="0.5"/>
<path d="M62 11 H63 M65 11 H66" stroke="#9ab" stroke-width="0.5"/>
<rect x="9.5" y="18" width="7.5" height="1.6" fill="#666"/>
<rect x="54.7" y="18" width="8" height="1.6" fill="#666"/>
</svg><div class="t" style="left:182.2px;top:384.90px;font-size:8.74px;line-height:12px;color:#333;font-weight:400;transform:scaleX(1.0870);-webkit-text-stroke-width:0.35px">h574tx</div>
<svg style="left:213.9px;top:386.7px" width="11" height="11" viewBox="0 0 11 11"><circle cx="4.4" cy="4.2" r="3.6" fill="none" stroke="#333" stroke-width="1.1"/><path d="M7 6.9 L9.6 9.3 M2.4 4.2 H6.4 M4.4 2.2 V6.2" stroke="#333" stroke-width="1.1"/></svg><div class="t" style="left:196.4px;top:397.50px;font-size:8.06px;line-height:10px;color:#808080;font-weight:400;transform:scaleX(0.8929);">1 / 1</div>
<svg style="left:185.8px;top:408px" width="10" height="10" viewBox="0 0 10 10"><circle cx="5" cy="5" r="5" fill="#3bb54a"/><path d="M2.6 5.2 L4.3 6.9 L7.5 3.5" fill="none" stroke="#fff" stroke-width="1.3"/></svg><div class="t" style="left:200.9px;top:408.70px;font-size:7.95px;line-height:10px;color:#666;font-weight:400;transform:scaleX(0.8929);">Good</div>
<div class="t" style="left:287.5px;top:295.00px;font-size:8.40px;line-height:10px;color:#444;font-weight:400;transform:scaleX(0.8929);">E1.S PCIe SSD 1</div>
<div class="a" style="left:742px;top:293px;width:48px;height:14.5px;border:1px solid #777;border-radius:3px"></div><div class="t" style="left:751.25px;top:296.20px;font-size:9.52px;line-height:10px;color:#555;font-weight:400;transform:scaleX(0.8929);-webkit-text-stroke-width:0.05px">Action</div>
<svg style="left:783.5px;top:299.2px" width="4" height="3" viewBox="0 0 4 3"><path d="M0 0H4L2 2.5Z" fill="#333"/></svg><div class="t" style="left:318.75px;top:314.70px;font-size:7.39px;line-height:8px;color:#333;font-weight:400;transform:scaleX(0.8929);-webkit-text-stroke-width:0.4px">Information</div>
<div class="t" style="left:373.75px;top:314.70px;font-size:7.06px;line-height:8px;color:#666;font-weight:400;transform:scaleX(0.8929);">Health</div>
<div class="t" style="left:413.75px;top:314.70px;font-size:7.06px;line-height:8px;color:#666;font-weight:400;transform:scaleX(0.8929);">Prediction</div>
<div class="a" style="left:287.5px;top:323px;width:506.5px;height:1.5px;background:#dcdcdc"></div><div class="a" style="left:790.4px;top:325.4px;width:4px;height:49.6px;background:#d2d2d2;border-radius:2px"></div><div class="t" style="left:289.5px;top:328.80px;font-size:7.84px;line-height:10px;color:#4a4a4a;font-weight:400;transform:scaleX(0.8929);-webkit-text-stroke-width:0">Manufacturer:</div>
<div class="t" style="left:415.5px;top:328.80px;font-size:7.73px;line-height:10px;color:#444;font-weight:400;transform:scaleX(0.8929);-webkit-text-stroke-width:0">NVMe</div>
<div class="t" style="left:500.7px;top:328.80px;font-size:7.84px;line-height:10px;color:#4a4a4a;font-weight:400;transform:scaleX(0.8929);-webkit-text-stroke-width:0">Model:</div>
<div class="t" style="left:627px;top:328.80px;font-size:7.73px;line-height:10px;color:#444;font-weight:400;transform:scaleX(0.8929);-webkit-text-stroke-width:0">KXD6CRJJ3T84</div>
<div class="t" style="left:289.5px;top:346.75px;font-size:7.84px;line-height:10px;color:#4a4a4a;font-weight:400;transform:scaleX(0.8929);-webkit-text-stroke-width:0">Disk Capacity:</div>
<div class="t" style="left:415.5px;top:346.75px;font-size:7.73px;line-height:10px;color:#444;font-weight:400;transform:scaleX(0.8929);-webkit-text-stroke-width:0">3.49 TB (3.8 TB)</div>
<div class="t" style="left:500.7px;top:346.75px;font-size:7.84px;line-height:10px;color:#4a4a4a;font-weight:400;transform:scaleX(0.8929);-webkit-text-stroke-width:0">Bus Type:</div>
<div class="t" style="left:627px;top:346.75px;font-size:7.73px;line-height:10px;color:#444;font-weight:400;transform:scaleX(0.8929);-webkit-text-stroke-width:0">PCIe (NVMe)</div>
<div class="t" style="left:289.5px;top:364.25px;font-size:7.84px;line-height:10px;color:#4a4a4a;font-weight:400;transform:scaleX(0.8929);-webkit-text-stroke-width:0">Status:</div>
<div class="t" style="left:415.5px;top:364.25px;font-size:7.73px;line-height:10px;color:#444;font-weight:400;transform:scaleX(0.8929);-webkit-text-stroke-width:0">Ready</div>
<div class="t" style="left:500.7px;top:364.25px;font-size:7.84px;line-height:10px;color:#4a4a4a;font-weight:400;transform:scaleX(0.8929);-webkit-text-stroke-width:0">SED Status:</div>
<div class="t" style="left:627px;top:364.25px;font-size:7.73px;line-height:10px;color:#eeb02a;font-weight:400;transform:scaleX(0.8929);-webkit-text-stroke-width:0">Blocked</div>
<div class="t" style="left:289.5px;top:381.75px;font-size:7.84px;line-height:10px;color:#4a4a4a;font-weight:400;transform:scaleX(0.8929);-webkit-text-stroke-width:0">SED Type:</div>
<div class="t" style="left:415.5px;top:381.75px;font-size:7.73px;line-height:10px;color:#444;font-weight:400;transform:scaleX(0.8929);-webkit-text-stroke-width:0">TCG Opal</div>
<div class="t" style="left:500.7px;top:381.75px;font-size:7.84px;line-height:10px;color:#4a4a4a;font-weight:400;transform:scaleX(0.8929);-webkit-text-stroke-width:0">Mode:</div>
<div class="t" style="left:627px;top:381.75px;font-size:7.73px;line-height:10px;color:#444;font-weight:400;transform:scaleX(0.8929);-webkit-text-stroke-width:0">Active (Spinning)</div>
<div class="t" style="left:289.5px;top:399.25px;font-size:7.84px;line-height:10px;color:#4a4a4a;font-weight:400;transform:scaleX(0.8929);-webkit-text-stroke-width:0">Current Speed:</div>
<div class="t" style="left:415.5px;top:399.25px;font-size:7.73px;line-height:10px;color:#444;font-weight:400;transform:scaleX(0.8929);-webkit-text-stroke-width:0">PCIe Gen.3 x 2 (2 G...</div>
<div class="t" style="left:500.7px;top:399.25px;font-size:7.84px;line-height:10px;color:#4a4a4a;font-weight:400;transform:scaleX(0.8929);-webkit-text-stroke-width:0">Maximum Speed:</div>
<div class="t" style="left:627px;top:399.25px;font-size:7.73px;line-height:10px;color:#444;font-weight:400;transform:scaleX(0.8929);-webkit-text-stroke-width:0">PCIe Gen.3 x 2 (2 G...</div>
<div class="t" style="left:289.5px;top:416.75px;font-size:7.84px;line-height:10px;color:#4a4a4a;font-weight:400;transform:scaleX(0.8929);-webkit-text-stroke-width:0">Temperature:</div>
<div class="t" style="left:415.5px;top:416.75px;font-size:7.73px;line-height:10px;color:#6cb24a;font-weight:400;transform:scaleX(0.8929);-webkit-text-stroke-width:0">48°C / 118°F</div>
<div class="t" style="left:500.7px;top:416.75px;font-size:7.84px;line-height:10px;color:#4a4a4a;font-weight:400;transform:scaleX(0.8929);-webkit-text-stroke-width:0">Disk Access History (I/O):</div>
<div class="t" style="left:627px;top:416.75px;font-size:7.73px;line-height:10px;color:#6cb24a;font-weight:400;transform:scaleX(0.8929);-webkit-text-stroke-width:0">Good</div>
<svg style="left:471.8px;top:346px" width="9.4" height="9.4" viewBox="0 0 10 10"><circle cx="5" cy="5" r="5" fill="#1e90e6"/><circle cx="5" cy="2.6" r="0.9" fill="#fff"/><rect x="4.25" y="4.1" width="1.5" height="4" fill="#fff"/></svg></div></body></html>
